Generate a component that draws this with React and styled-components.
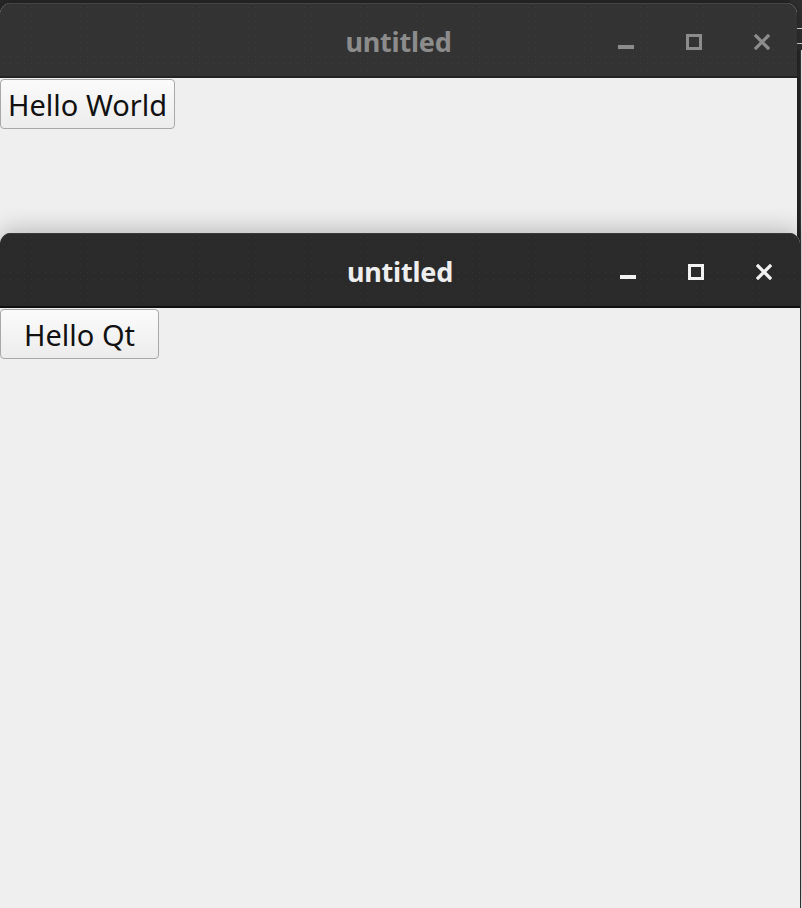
import styled, { createGlobalStyle } from 'styled-components';

const GlobalStyle = createGlobalStyle`
  html, body {
    margin: 0;
    padding: 0;
    background: #1d1d1d;
  }
  body {
    font-family: "Noto Sans", "DejaVu Sans", sans-serif;
  }
`;

const MinimizeIcon = () => (
  <svg width="16" height="16" viewBox="0 0 16 16">
    <rect x="0" y="11" width="16" height="4" fill="currentColor" />
  </svg>
);

const MaximizeIcon = () => (
  <svg width="16" height="16" viewBox="0 0 16 16">
    <rect x="1.5" y="1.5" width="13" height="13" fill="none" stroke="currentColor" strokeWidth="3" />
  </svg>
);

const CloseIcon = () => (
  <svg width="16" height="16" viewBox="0 0 16 16">
    <path d="M2 2 L14 14 M14 2 L2 14" stroke="currentColor" strokeWidth="3.2" strokeLinecap="square" />
  </svg>
);

const Window = ({ title, active, top, width, height, label, minWidth }) => (
  <WindowFrame $top={top} $width={width} $height={height} $active={active}>
    <TitleBar $active={active}>
      <span />
      <Title $active={active}>{title}</Title>
      <Controls $active={active}>
        <MinimizeIcon />
        <MaximizeIcon />
        <CloseIcon />
      </Controls>
    </TitleBar>
    <Content>
      <PushButton $minWidth={minWidth}>{label}</PushButton>
    </Content>
  </WindowFrame>
);

const App = () => {
  return (
    <>
      <GlobalStyle />
      <Desktop>
        <BackWindow>
          <BackTitle />
          <BackBody />
        </BackWindow>
        <Window title="untitled" top={3} width={797} height={300} label="Hello World" minWidth={0} />
        <Window title="untitled" active top={233} width={800} height={675} label="Hello Qt" minWidth={159} />
      </Desktop>
    </>
  );
};

const Desktop = styled.div`
  position: relative;
  width: 802px;
  height: 908px;
  overflow: hidden;
  background: #262626;
`;

const BackWindow = styled.div`
  position: absolute;
  left: 790px;
  top: 0;
  width: 40px;
  height: 908px;
  display: flex;
  flex-direction: column;
`;

const BackTitle = styled.div`
  height: 50px;
  background: #2e2e2e;
  border-top: 28px solid #2e2e2e;
  box-sizing: border-box;
  background-image: linear-gradient(
    to bottom,
    #cfcfcf 0,
    #cfcfcf 1px,
    #2e2e2e 1px,
    #2e2e2e 15px,
    #cfcfcf 15px,
    #cfcfcf 16px,
    #2e2e2e 16px
  );
`;

const BackBody = styled.div`
  flex: 1;
  background: #e4e4e4;
  border-left: 1px solid #333;
  margin-left: 10px;
`;

const WindowFrame = styled.div`
  position: absolute;
  left: 0;
  top: ${(p) => p.$top}px;
  width: ${(p) => p.$width}px;
  height: ${(p) => p.$height}px;
  display: flex;
  flex-direction: column;
  border-radius: 11px 11px 0 0;
  overflow: hidden;
  background: #efefef;
  box-shadow: ${(p) => (p.$active ? '0 -4px 22px rgba(0, 0, 0, 0.22)' : '0 0 6px rgba(0, 0, 0, 0.3)')};
`;

const TitleBar = styled.div`
  height: 75px;
  flex-shrink: 0;
  display: grid;
  grid-template-columns: 1fr auto 1fr;
  align-items: center;
  padding-top: 3px;
  background-color: ${(p) => (p.$active ? '#2a2a2a' : '#333333')};
  background-image: radial-gradient(rgba(255, 255, 255, 0.05) 0.8px, transparent 1px);
  background-size: 7px 7px;
  border-top: 1px solid ${(p) => (p.$active ? '#3a3a3a' : '#444')};
  border-bottom: 2px solid ${(p) => (p.$active ? '#111' : '#232323')};
  box-sizing: border-box;
`;

const Title = styled.span`
  font-family: "Noto Sans", "DejaVu Sans", sans-serif;
  font-weight: 700;
  font-size: 27px;
  letter-spacing: -0.2px;
  color: ${(p) => (p.$active ? '#eeeeee' : '#8c8c8c')};
`;

const Controls = styled.div`
  display: flex;
  justify-content: flex-end;
  align-items: center;
  gap: 52px;
  padding-right: ${(p) => (p.$active ? 28 : 27)}px;
  color: ${(p) => (p.$active ? '#f2f2f2' : '#8c8c8c')};

  svg {
    display: block;
  }
`;

const Content = styled.div`
  flex: 1;
  display: flex;
  align-items: flex-start;
  padding-top: 1px;
  background: #efefef;
`;

const PushButton = styled.button`
  height: 50px;
  min-width: ${(p) => p.$minWidth}px;
  padding: 0 7px;
  box-sizing: border-box;
  font-family: "Noto Sans", "DejaVu Sans", sans-serif;
  font-size: 29px;
  color: #111;
  background: linear-gradient(to bottom, #fbfbfb, #ececec);
  border: 1px solid #a8a8a8;
  border-radius: 4px;
  cursor: default;
`;

export default App;
